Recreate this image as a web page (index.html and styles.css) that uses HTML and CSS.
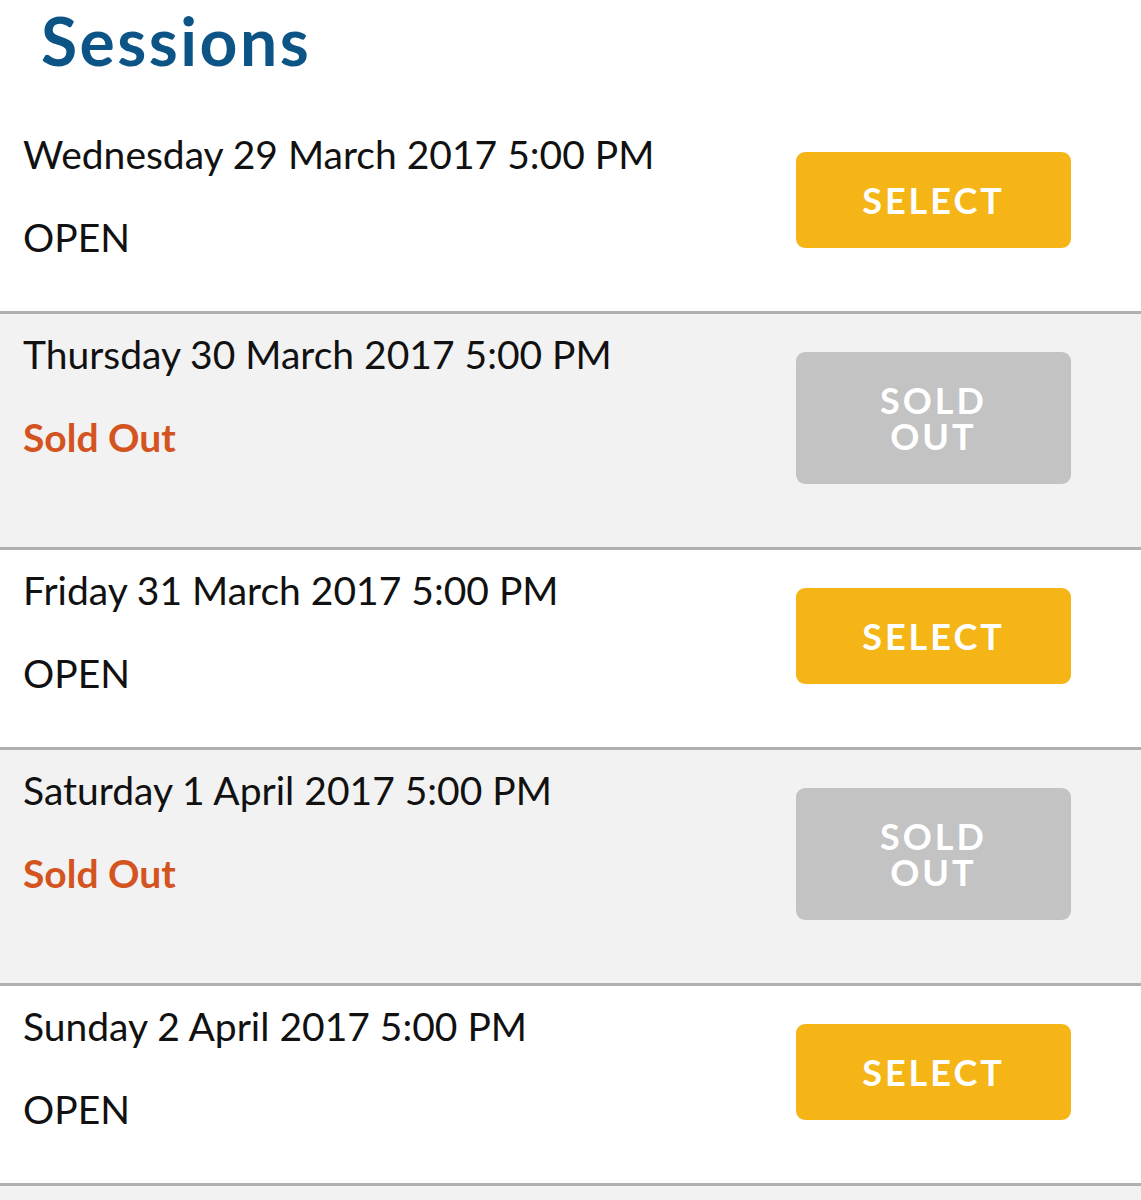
FILE: index.html
```html
<!DOCTYPE html>
<html lang="en">
<head>
<meta charset="utf-8">
<title>Sessions</title>
<link rel="stylesheet" href="styles.css">
</head>
<body>
<div class="page">
  <h1 class="title">Sessions</h1>
  <ul class="sessions">
    <li class="session">
      <div class="info">
        <div class="date">Wednesday 29 March 2017 5:00 PM</div>
        <div class="status">OPEN</div>
      </div>
      <button class="btn btn-select">SELECT</button>
    </li>
    <li class="session sold">
      <div class="info">
        <div class="date">Thursday 30 March 2017 5:00 PM</div>
        <div class="status status-sold">Sold Out</div>
      </div>
      <button class="btn btn-sold">SOLD OUT</button>
    </li>
    <li class="session">
      <div class="info">
        <div class="date">Friday 31 March 2017 5:00 PM</div>
        <div class="status">OPEN</div>
      </div>
      <button class="btn btn-select">SELECT</button>
    </li>
    <li class="session sold">
      <div class="info">
        <div class="date">Saturday 1 April 2017 5:00 PM</div>
        <div class="status status-sold">Sold Out</div>
      </div>
      <button class="btn btn-sold">SOLD OUT</button>
    </li>
    <li class="session">
      <div class="info">
        <div class="date">Sunday 2 April 2017 5:00 PM</div>
        <div class="status">OPEN</div>
      </div>
      <button class="btn btn-select">SELECT</button>
    </li>
  </ul>
</div>
</body>
</html>
```
FILE: styles.css
```css
html {
  background: #f2f2f2;
}
body {
  margin: 0;
  font-family: Lato, "Open Sans", sans-serif;
  color: #111;
}
.page {
  background: #fff;
}
.title {
  margin: 0;
  padding: 0 0 0 41px;
  height: 114px;
  box-sizing: border-box;
  font-size: 66px;
  line-height: 82px;
  letter-spacing: 2.5px;
  font-weight: 700;
  color: #0d5486;
}
.sessions {
  list-style: none;
  margin: 0;
  padding: 0;
}
.session {
  display: flex;
  justify-content: space-between;
  align-items: flex-start;
  padding: 38px 70px 63px 23px;
  border-bottom: 3px solid #b0b0b0;
  background: #fff;
}
.session.sold {
  background: #f2f2f2;
}
.info {
  margin: -20px 0 -40px;
}
.date {
  font-size: 39px;
  line-height: 44px;
}
.status {
  margin-top: 39px;
  font-size: 39px;
  line-height: 44px;
}
.status-sold {
  color: #d4541f;
  font-weight: 700;
}
.btn {
  width: 275px;
  box-sizing: border-box;
  padding: 30px 55px;
  border: 0;
  border-radius: 9px;
  font-family: Lato, "Open Sans", sans-serif;
  font-size: 36px;
  line-height: 36px;
  font-weight: 700;
  letter-spacing: 3px;
  color: #fff;
  text-align: center;
}
.btn-select {
  background: #f5b516;
}
.btn-sold {
  background: #c3c3c3;
}
```
